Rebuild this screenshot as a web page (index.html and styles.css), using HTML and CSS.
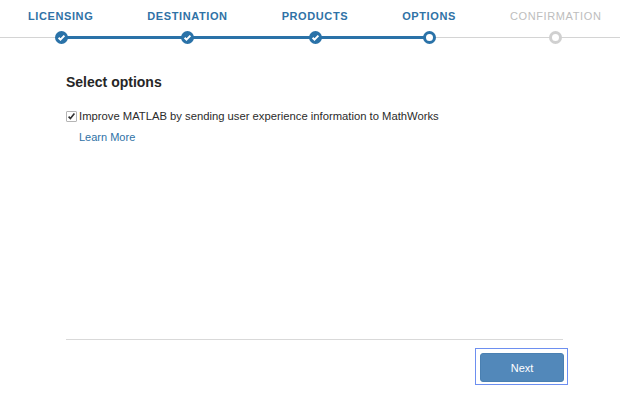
FILE: index.html
```html
<!DOCTYPE html>
<html lang="en">
<head>
<meta charset="utf-8">
<title>Select options</title>
<link rel="stylesheet" href="styles.css">
</head>
<body>
<div class="page">
  <nav class="stepper">
    <div class="track"></div>
    <div class="progress"></div>
    <div class="step done"><span class="label">LICENSING</span><span class="dot"><svg viewBox="0 0 13 13" width="13" height="13"><path d="M3.6 6.7 5.5 8.6 9.4 4.6" fill="none" stroke="#fff" stroke-width="2"/></svg></span></div>
    <div class="step done"><span class="label">DESTINATION</span><span class="dot"><svg viewBox="0 0 13 13" width="13" height="13"><path d="M3.6 6.7 5.5 8.6 9.4 4.6" fill="none" stroke="#fff" stroke-width="2"/></svg></span></div>
    <div class="step done"><span class="label">PRODUCTS</span><span class="dot"><svg viewBox="0 0 13 13" width="13" height="13"><path d="M3.6 6.7 5.5 8.6 9.4 4.6" fill="none" stroke="#fff" stroke-width="2"/></svg></span></div>
    <div class="step current"><span class="label">OPTIONS</span><span class="dot"></span></div>
    <div class="step pending"><span class="label">CONFIRMATION</span><span class="dot"></span></div>
  </nav>
  <main class="content">
    <h1 class="title">Select options</h1>
    <label class="option">
      <span class="box"><svg viewBox="0 0 11 11" width="11" height="11"><path d="M2.6 5.6 4.4 7.6 8.4 2.6" fill="none" stroke="#333" stroke-width="1.6"/></svg></span>
      <span>Improve MATLAB by sending user experience information to MathWorks</span>
    </label>
    <a class="more" href="#">Learn More</a>
  </main>
  <footer class="footer">
    <div class="focus"><button class="next" type="button">Next</button></div>
  </footer>
</div>
</body>
</html>
```
FILE: styles.css
```css
* { box-sizing: border-box; }
html, body { margin: 0; height: 100%; background: #fff; }
body { font-family: "Liberation Sans", Arial, sans-serif; overflow: hidden; }
.page { width: 620px; height: 413px; display: flex; flex-direction: column; }

.stepper { position: relative; display: flex; gap: 54px; padding: 9px 0 0 28px; height: 44px; flex: none; }
.track { position: absolute; left: 0; right: 0; top: 37px; height: 1px; background: #d4d4d4; }
.progress { position: absolute; left: 61px; top: 36px; width: 368px; height: 3px; background: #2a72a8; }
.step { position: relative; display: flex; flex-direction: column; align-items: center; gap: 8px; }
.label { font-size: 11px; line-height: 14px; font-weight: 700; letter-spacing: 0.6px; color: #2f72a6; white-space: nowrap; }
.dot { width: 13px; height: 13px; margin-left: 1px; border-radius: 50%; background: #fff; border: 3px solid #2a72a8; display: block; position: relative; }
.done .dot { background: #2a72a8; }
.dot svg { position: absolute; left: -3px; top: -3px; display: block; }
.pending .label { color: #bdbdbd; font-weight: 400; letter-spacing: 0.62px; }
.pending .dot { border-color: #d0d0d0; margin-left: 0; }

.content { flex: 1; padding: 30px 0 0 66px; }
.title { margin: 0; font-size: 14px; line-height: 16px; font-weight: 700; color: #262626; }
.option { display: flex; align-items: center; gap: 2px; margin-top: 19px; font-size: 11.25px; line-height: 14px; color: #2b2b2b; }
.box { width: 11px; height: 11px; border: 1px solid #b5b5b5; border-radius: 1px; background: #fff; position: relative; display: block; }
.box svg { position: absolute; left: -1px; top: -1px; display: block; }
.more { display: inline-block; margin: 7px 0 0 13px; font-size: 11px; line-height: 14px; color: #2f72a6; text-decoration: none; }

.footer { flex: none; margin: 0 57px 0 66px; border-top: 1px solid #d9d9d9; height: 74px; display: flex; justify-content: flex-end; align-items: flex-start; padding-top: 8px; }
.focus { width: 93px; height: 37px; margin-right: -5px; border: 1px solid #6d8ff0; padding: 4px 3px 2px 4px; }
.next { display: block; width: 84px; height: 29px; background: #5288ba; border: 1px solid #4a80b2; border-radius: 3px; color: #fff; font: 11px "Liberation Sans", Arial, sans-serif; padding: 0; }
```
